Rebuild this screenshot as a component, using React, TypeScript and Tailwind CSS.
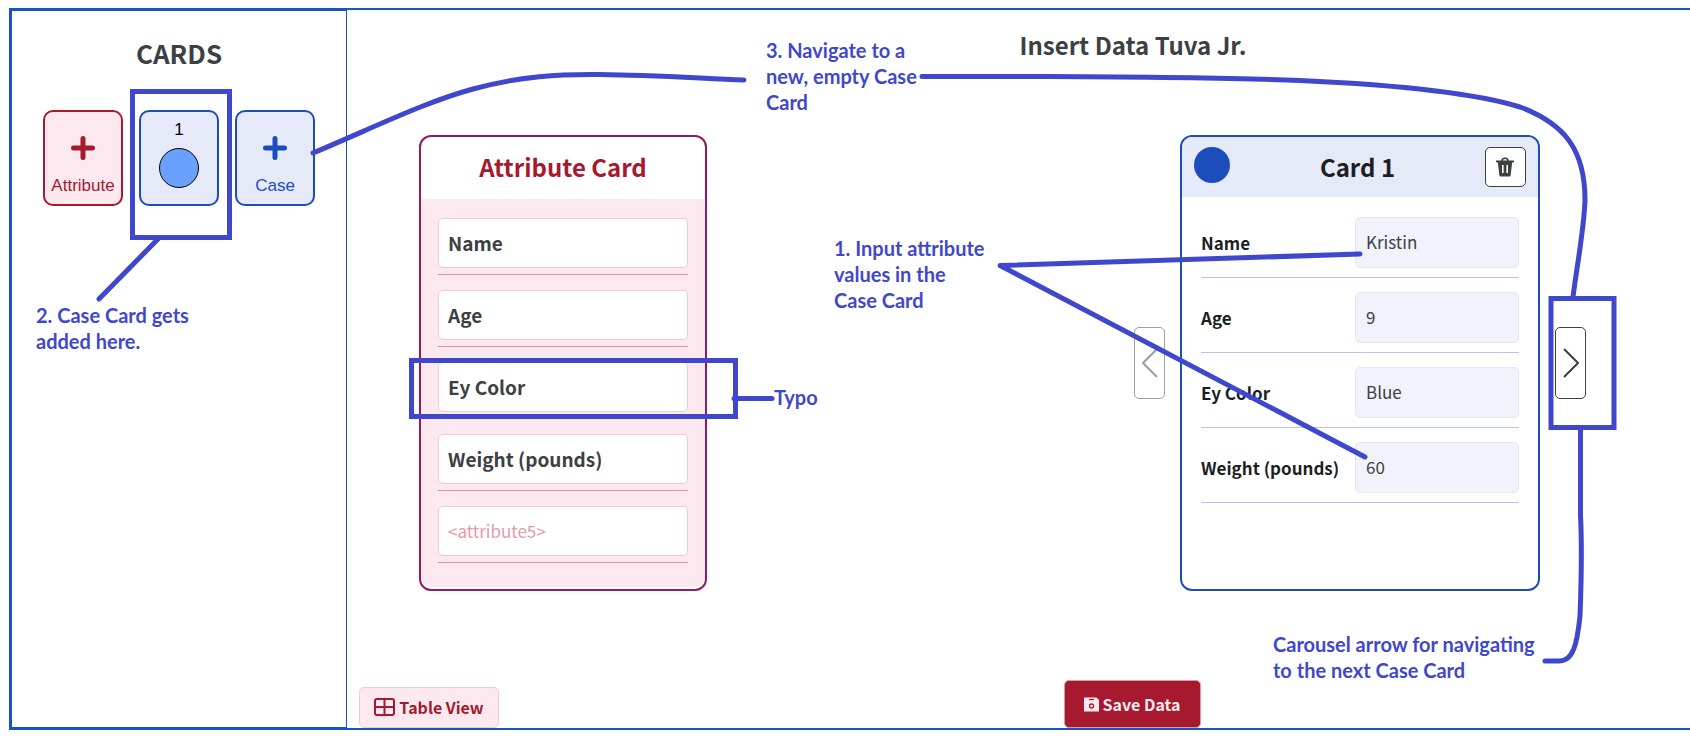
import { FormEvent, ReactNode } from 'react';

const ATTRIBUTES = ['Name', 'Age', 'Ey Color', 'Weight (pounds)'];

const CASE_VALUES = [
  { label: 'Name', value: 'Kristin' },
  { label: 'Age', value: '9' },
  { label: 'Ey Color', value: 'Blue' },
  { label: 'Weight (pounds)', value: '60' },
];

const PlusIcon = () => (
  <svg width="24" height="24" viewBox="0 0 24 24" fill="none" stroke="currentColor" strokeWidth="5" strokeLinecap="round" aria-hidden="true">
    <path d="M12 2.5v19M2.5 12h19" />
  </svg>
);

const TrashIcon = () => (
  <svg width="20" height="20" viewBox="0 0 20 20" aria-hidden="true">
    <path d="M7 4Q7 1.300 10 1.300Q13 1.300 13 4" fill="none" stroke="currentColor" strokeWidth="1.6" />
    <path d="M1 3.5h18v1.500q-1 .5-2 .5H3q-1 0-2-.5z" fill="currentColor" />
    <path d="M2.800 5h14.400l-1.500 13q-.2 1.500-1.500 1.500H5.800q-1.300 0-1.500-1.500z" fill="currentColor" />
    <path d="M7.800 8v8M12.200 8v8" stroke="#fff" strokeWidth="1.6" />
  </svg>
);

const TableIcon = () => (
  <svg width="21" height="18" viewBox="0 0 21 18" fill="none" stroke="currentColor" strokeWidth="2" aria-hidden="true">
    <rect x="1" y="1" width="19" height="16" rx="2" />
    <path d="M10.500 1v16M1 9h19" />
  </svg>
);

const SaveIcon = () => (
  <svg width="15" height="15" viewBox="0 0 15 15" aria-hidden="true">
    <path d="M0 .5h12.500L15 3v11.500H0z" fill="currentColor" />
    <path d="M5 2.500h5" stroke="#a6192e" strokeWidth="1.3" />
    <circle cx="7.500" cy="9" r="2" fill="none" stroke="#a6192e" strokeWidth="1.3" />
  </svg>
);

interface ChevronProps {

  /** SVG path of the arrow. */
  readonly d: string;
}

const Chevron = ({ d }: ChevronProps) => (
  <svg width="16" height="30" viewBox="0 0 16 30" fill="none" stroke="currentColor" strokeWidth="2" aria-hidden="true">
    <path d={d} />
  </svg>
);

const Sidebar = () => (
  <aside className="flex w-[336px] shrink-0 flex-col items-center border border-[#1656bf] pt-[22px]">
    <h2 className="text-[26px] leading-[40px] font-bold text-[#3c4043]">CARDS</h2>
    <div className="mt-[37px] flex gap-4 font-['Liberation_Sans',Arial,sans-serif] text-[17px] leading-5">
      <button type="button" className="flex h-24 w-20 flex-col items-center rounded-[10px] border-2 border-[#a6192e] bg-[#fbe9ef] pt-6 text-[#a6192e]">
        <PlusIcon />
        <span className="mt-4">Attribute</span>
      </button>
      <button type="button" className="flex h-24 w-20 flex-col items-center rounded-[10px] border-2 border-[#1d4dbb] bg-[#e5e9f8] pt-2 text-black">
        <span>1</span>
        <span className="mt-2 size-10 rounded-full border border-black bg-[#6aa0fe]" />
      </button>
      <button type="button" className="flex h-24 w-20 flex-col items-center rounded-[10px] border-2 border-[#1d4dbb] bg-[#e5e9f8] pt-6 text-[#1d4dbb]">
        <PlusIcon />
        <span className="mt-4">Case</span>
      </button>
    </div>
  </aside>
);

const AttributeCard = () => (
  <section className="flex min-h-[456px] w-72 shrink-0 flex-col rounded-xl border-2 border-[#8f1a66] pb-0.5">
    <h2 className="h-[62px] text-center text-2xl leading-[60px] font-bold text-[#a6192e]">Attribute Card</h2>
    <div className="flex-1 rounded-b-[10px] bg-[#fbe9ef] px-[17px] pt-1">
      {ATTRIBUTES.map(attribute => (
        <div key={attribute} className="border-b border-[#e28f9c] pt-[15px] pb-1.5">
          <input
            type="text"
            aria-label="Attribute name"
            defaultValue={attribute}
            className="block h-[50px] w-full rounded-[5px] border border-[#f4c9d5] bg-white px-[9px] pb-0.5 text-[19px] font-bold text-[#3c4043]"
          />
        </div>
      ))}
      <div className="border-b border-[#e28f9c] pt-[15px] pb-1.5">
        <input
          type="text"
          aria-label="New attribute"
          placeholder="<attribute5>"
          className="block h-[50px] w-full rounded-[5px] border border-[#f4c9d5] bg-white px-[9px] pb-0.5 text-[17px] placeholder:text-[#e59aa8]"
        />
      </div>
    </div>
  </section>
);

const CaseCard = () => (
  <section className="min-h-[456px] w-[360px] shrink-0 overflow-hidden rounded-xl border-2 border-[#1d4dbb]">
    <div className="flex h-[60px] items-start justify-between bg-[#e5e9f8] px-3 pt-2.5">
      <span className="size-9 rounded-full bg-[#1d4dbb]" />
      <h2 className="text-2xl leading-[40px] font-bold text-[#1b1f23]">Card 1</h2>
      <button
        type="button"
        aria-label="Delete card"
        className="flex h-10 w-[41px] items-center justify-center rounded-[5px] border border-[#3c4043] bg-white text-[#3c4043]"
      >
        <TrashIcon />
      </button>
    </div>
    <div className="px-[19px] pt-1.5">
      {CASE_VALUES.map(({ label, value }) => (
        <label key={label} className="flex items-center justify-between border-b border-[#b9c3ea] pt-3.5 pb-[9px]">
          <span className="text-[17px] font-bold text-[#1b1f23]">{label}</span>
          <input
            type="text"
            defaultValue={value}
            className="h-[51px] w-[164px] rounded-[5px] border border-[#e2e6ee] bg-[#f0f3fc] px-2.5 pb-0.5 text-[17px] text-[#3c4043]"
          />
        </label>
      ))}
    </div>
  </section>
);

interface NoteProps {

  /** Place and width of the note. */
  readonly className: string;
  readonly children: ReactNode;
}

const Note = ({ className, children }: NoteProps) => (
  <p className={`absolute font-['Lato',sans-serif] text-xl leading-[26px] font-bold text-[#3f48cc] ${className}`}>
    {children}
  </p>
);

/** Markup drawn on top of the whole page. */
const Annotations = () => (
  <div className="pointer-events-none absolute inset-0 overflow-hidden">
    <svg width="1690" height="743" viewBox="0 0 1690 743" fill="none" stroke="#3f48cc" strokeWidth="5" strokeLinecap="round" strokeLinejoin="round" aria-hidden="true">
      <g strokeLinejoin="miter">
        <path d="M132.500 91.500h97v146h-97z" />
        <path d="M411.500 360.500h324v56h-324z" />
        <path d="M1551 298.500h63v129h-63z" />
      </g>
      <path d="M158 239L99 299" />
      <path d="M313 153C375 127 425 102 473 89C520 76 560 74 600 74.500C650 75 695 78 744 80" />
      <path d="M922 76.500H1049C1150 77 1240 78 1300 80.500C1400 85 1475 93 1520 107C1565 124 1585 150 1585 200C1584 230 1577 265 1573 297" />
      <path d="M1360 254L1000 265.500L1365 457" />
      <path d="M734 398.500H772" />
      <path d="M1580.500 430V515C1582 545 1581 590 1580 616C1577 645 1573 661 1559 661H1545" />
    </svg>
    <Note className="top-[37px] left-[766px] w-[155px]">3. Navigate to a new, empty Case Card</Note>
    <Note className="top-[235px] left-[834px] w-[155px]">1. Input attribute values in the Case Card</Note>
    <Note className="top-[302px] left-9 w-[170px]">2. Case Card gets added here.</Note>
    <Note className="top-[384px] left-[774px]">Typo</Note>
    <Note className="top-[631px] left-[1273px] w-[270px]">Carousel arrow for navigating to the next Case Card</Note>
  </div>
);

const App = () => {
  const onSubmit = (event: FormEvent) => {
    event.preventDefault();
  };

  return (
    <div className="relative flex min-h-screen bg-white pt-2 pb-[13px] pl-[9px] font-['Noto_Sans_CJK_SC',sans-serif]">
      <div className="flex flex-1 border-2 border-r-0 border-[#1656bf]">
        <Sidebar />
        <form onSubmit={onSubmit} className="flex flex-1 flex-col">
          <h1 className="pt-[15px] pl-[229px] text-center text-2xl leading-[40px] font-bold text-[#3c4043]">
            Insert Data Tuva Jr.
          </h1>
          <div className="mt-[70px] flex justify-between pr-[104px] pl-[72px]">
            <AttributeCard />
            <div className="flex items-center">
              <button type="button" aria-label="Previous card" disabled className="mr-[15px] flex h-[72px] w-[31px] items-center justify-center rounded-[5px] border border-[#9d9fa1] text-[#9d9fa1]">
                <Chevron d="M15 1L1 15l14 14" />
              </button>
              <CaseCard />
              <button type="button" aria-label="Next card" className="ml-[15px] flex h-[72px] w-[31px] items-center justify-center rounded-[5px] border border-[#3c4043] text-[#3c4043]">
                <Chevron d="M1 1l14 14L1 29" />
              </button>
            </div>
          </div>
          <div className="mt-auto flex items-end pl-3">
            <button type="button" className="flex h-[41px] w-[140px] items-center justify-center gap-1 rounded-[5px] border border-[#f4c9d5] bg-[#fbe9ef] pb-0.5 text-base font-bold text-[#a6192e]">
              <TableIcon />
              Table View
            </button>
            <div className="flex flex-1 justify-center pl-[75px]">
              <button type="submit" className="flex h-12 w-[137px] items-center justify-center gap-1 rounded-[5px] border border-[#d99aa6] bg-[#a6192e] text-base font-bold text-[#fbe9ef]">
                <SaveIcon />
                Save Data
              </button>
            </div>
          </div>
        </form>
      </div>
      <Annotations />
    </div>
  );
};

export default App;
